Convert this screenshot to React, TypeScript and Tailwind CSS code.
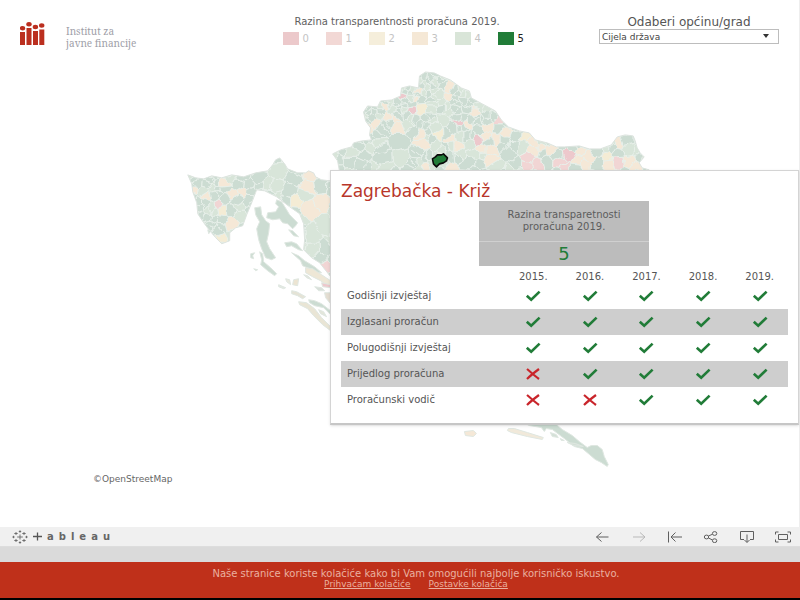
import { useMemo, useState } from "react"

type Point = [number, number]

const legend = [
  { level: 0, swatch: "bg-[#ecc9cb]" },
  { level: 1, swatch: "bg-[#f2d8d5]" },
  { level: 2, swatch: "bg-[#f5eedb]" },
  { level: 3, swatch: "bg-[#f5e8d6]" },
  { level: 4, swatch: "bg-[#d9e5d8]" },
  { level: 5, swatch: "bg-[#217c38]" },
]

const years = ["2015.", "2016.", "2017.", "2018.", "2019."]

const documents = [
  { name: "Godišnji izvještaj", published: [true, true, true, true, true] },
  { name: "Izglasani proračun", published: [true, true, true, true, true] },
  { name: "Polugodišnji izvještaj", published: [true, true, true, true, true] },
  { name: "Prijedlog proračuna", published: [false, true, true, true, true] },
  { name: "Proračunski vodič", published: [false, false, true, true, true] },
]

const LIGHT = "#d8e5d9"
const DARK = "#ccdcd2"
const TAN = "#f5e8d7"
const CREAM = "#f4ecd5"
const PINK = "#f1d5d4"
const ROSE = "#edc8cc"

// [x, y, radius, fill] of the municipalities that stand out from the rest
const spots: [number, number, number, string][] = [
  [279, 169, 9, LIGHT], [296, 179, 9, DARK], [311, 175, 6, TAN], [321, 185, 9, DARK], [308, 187, 6, TAN],
  [305, 195, 6, LIGHT], [290, 192, 6, DARK], [296, 201, 8, CREAM], [309, 208, 10, TAN], [323, 201, 12, TAN],
  [313, 234, 13, LIGHT], [326, 226, 10, LIGHT], [327, 250, 9, DARK], [313, 251, 9, LIGHT],
  [208, 197, 5, TAN], [233, 195, 6, TAN], [243, 191, 6, TAN], [223, 210, 5, CREAM], [230, 225, 7, TAN], [220, 205, 2, PINK],
  [240, 215, 8, LIGHT], [242, 176, 8, DARK], [258, 178, 8, DARK], [222, 240, 4, CREAM],
  [403, 97, 4, ROSE], [412, 110, 4, ROSE], [422, 109, 6, CREAM], [419, 92, 3, TAN], [388, 118, 4, TAN],
  [376, 123, 5, TAN], [400, 126, 4, TAN], [386, 105, 3, TAN], [424, 144, 6, TAN], [400, 141, 14, DARK], [415, 131, 8, DARK],
  [404, 157, 11, LIGHT], [366, 157, 9, DARK], [350, 151, 8, LIGHT], [381, 158, 8, DARK], [350, 164, 8, DARK],
  [440, 134, 6, CREAM], [451, 139, 6, TAN], [457, 146, 4, TAN], [443, 120, 9, LIGHT], [450, 88, 5, TAN],
  [448, 97, 5, TAN], [468, 124, 5, TAN], [460, 123, 2, ROSE], [478, 139, 2, ROSE], [500, 120, 5, PINK],
  [478, 131, 4, DARK], [485, 138, 4, TAN], [472, 142, 4, LIGHT],
  [489, 127, 5, TAN], [506, 132, 5, TAN], [498, 141, 5, TAN], [492, 150, 5, TAN], [483, 150, 5, TAN],
  [500, 128, 4, DARK], [516, 136, 7, DARK], [527, 137, 6, CREAM], [536, 144, 3, TAN], [524, 147, 8, LIGHT], [509, 152, 8, DARK],
  [530, 158, 7, PINK], [527, 167, 6, PINK], [539, 164, 5, PINK], [534, 151, 4, TAN], [552, 151, 5, TAN],
  [547, 162, 7, DARK], [560, 163, 6, PINK], [570, 153, 6, ROSE], [564, 169, 4, PINK], [581, 151, 6, TAN],
  [590, 157, 7, TAN], [579, 159, 5, TAN], [578, 169, 8, DARK], [597, 167, 6, DARK], [620, 143, 4, TAN],
  [628, 140, 5, DARK], [630, 149, 8, LIGHT], [619, 163, 6, PINK], [609, 155, 4, CREAM], [632, 161, 7, TAN],
  [638, 165, 5, TAN], [611, 168, 5, TAN], [426, 167, 6, TAN], [450, 168, 7, TAN], [490, 160, 5, TAN],
  [479, 101, 3, DARK], [432, 164, 6, LIGHT], [469, 163, 8, DARK], [495, 168, 7, LIGHT], [467, 110, 6, DARK],
  [326, 268, 10, PINK],
]

const mainland =
  "M188 175 L196 178 204 179 212 176 222 178 232 175 244 177 256 173 268 171 273 165 276 160 280 158 285 164 288 169 298 173 306 173 309 171 314 173 316 177 322 180 331 181 340 172 338 161 333 154 341 150 352 147 354 143 362 141 372 140 370 135 371 128 366 121 364 112 368 106 378 107 381 101 392 100 401 96 402 88 410 86 419 88 420 76 426 72 435 73 441 76 451 80 462 88 470 91 472 98 483 104 496 111 502 120 509 127 520 131 530 133 536 140 548 143 557 147 565 147 580 146 590 149 601 149 612 145 618 137 626 135 634 136 636 141 638 148 641 153 645 157 640 163 643 168 650 170 650 190 400 300 331 277 320 263 312 258 304 250 305 240 304 224 300 214 290 207 277 197 265 191 257 190 252 203 247 215 243 226 236 228 230 233 230 241 222 244 216 238 210 231 204 223 198 214 197 203 193 192 192 184Z"

const islands: { d: string; fill: string }[] = [
  { d: "M255 208 L261 207 262 215 266 221 270 224 269 233 267 242 270 249 276 258 272 260 266 258 262 249 259 240 257 229 260 222 256 215Z", fill: DARK },
  { d: "M260 252 L263 254 264 262 271 268 277 274 275 276 268 271 261 265 262 260Z", fill: DARK },
  { d: "M251 254 L255 253 253 256 254 259 251 258Z", fill: DARK },
  { d: "M254 269 L258 270 256 271Z", fill: DARK },
  { d: "M277 200 L282 202 287 210 290 215 298 223 296 226 293 229 288 224 283 223 280 219 273 220 267 218 268 213 276 212 279 207 276 204Z", fill: DARK },
  { d: "M289 230 L293 231 299 237 294 236Z", fill: DARK },
  { d: "M285 243 L292 242 297 244 303 251 299 250 292 246 287 247Z", fill: DARK },
  { d: "M292 253 L299 256 305 261 315 267 322 273 318 273 310 269 303 266 301 261Z", fill: DARK },
  { d: "M306 268 L313 269 322 275 331 281 331 288 321 281 313 277 306 273Z", fill: "#eee7d6" },
  { d: "M304 275 L308 276 312 280 307 278Z", fill: "#e2e6df" },
  { d: "M286 279 L290 280 291 285 287 282Z", fill: "#e8e9df" },
  { d: "M294 280 L299 279 298 286 293 285Z", fill: "#ece4d2" },
  { d: "M279 285 L286 288 284 289 279 287Z", fill: "#e3e8e2" },
  { d: "M292 291 L297 292 306 297 303 299 298 296 292 294Z", fill: "#e5e3d6" },
  { d: "M309 300 L315 301 322 304 331 311 331 315 324 308 315 306 310 303Z", fill: DARK },
  { d: "M319 310 L324 312 327 317 321 314Z", fill: "#e3e6da" },
  { d: "M299 302 L307 303 315 309 322 318 331 327 331 331 323 325 314 316 308 309 300 305Z", fill: "#e9e5d5" },
  { d: "M315 287 L322 288 325 291 319 291Z", fill: "#d9e0da" },
  { d: "M322 283 L331 285 331 288 323 287Z", fill: ROSE },
  { d: "M325 293 L331 293 331 304 326 298Z", fill: "#e4ded2" },
  { d: "M208 230 L211 231 209 234Z", fill: DARK },
  { d: "M465 432 L474 431 477 434 474 437 466 436Z", fill: TAN },
  { d: "M509 429 L515 429 528 433 544 438 543 440 528 437 512 433 508 431Z", fill: "#f1e9da" },
  { d: "M518 420 L550 418 556 424 563 430 573 436 580 442 588 448 592 446 598 446 603 450 605 457 609 465 608 467 602 463 596 460 589 454 583 449 575 447 565 439 553 430 547 429 545 432 542 428 530 426Z", fill: DARK },
  { d: "M551 433 L557 435 559 438 553 437Z M561 439 L565 441 562 441Z M568 443 L576 444 584 447 574 446Z", fill: "#d4e0d7" },
]

// Deterministic noise, so the map is drawn the same on every render
const noise = (n: number) => {
  const s = Math.sin(n * 127.1) * 43758.5453
  return s - Math.floor(s)
}

const buildCells = () => {
  const seeds = spots.map(([x, y, , fill]) => ({ x, y, fill }))
  let n = 1
  for (let row = 0; row < 36; row++) {
    for (let col = 0; col < 92; col++) {
      n += 3
      const x = 180 + col * 6 + noise(n) * 6
      const y = 66 + row * 6 + noise(n + 1) * 6
      // The small municipalities lie in the north
      const isDense = x > 360 && x < 475 && y < 135
      if (!isDense && noise(n + 2) > 0.6) continue
      if (spots.some(([sx, sy, r]) => Math.hypot(sx - x, sy - y) < r * 1.1)) continue
      const shade = noise(n + 0.5)
      seeds.push({ x, y, fill: shade > 0.97 ? TAN : shade > 0.6 ? LIGHT : DARK })
    }
  }
  return seeds.map((a, i) => {
    let cell: Point[] = [[a.x - 22, a.y - 22], [a.x + 22, a.y - 22], [a.x + 22, a.y + 22], [a.x - 22, a.y + 22]]
    seeds.forEach((b, j) => {
      if (i === j || Math.abs(a.x - b.x) > 44 || Math.abs(a.y - b.y) > 44) return
      const dx = b.x - a.x
      const dy = b.y - a.y
      const side = ([x, y]: Point) => (x - (a.x + b.x) / 2) * dx + (y - (a.y + b.y) / 2) * dy
      const next: Point[] = []
      cell.forEach((p, k) => {
        const q = cell[(k + 1) % cell.length]
        const sp = side(p)
        const sq = side(q)
        if (sp <= 0) next.push(p)
        if (sp * sq < 0) {
          const t = sp / (sp - sq)
          next.push([p[0] + (q[0] - p[0]) * t, p[1] + (q[1] - p[1]) * t])
        }
      })
      cell = next
    })
    return { fill: a.fill, points: cell.map(([x, y]) => `${x.toFixed(1)},${y.toFixed(1)}`).join(" ") }
  })
}

function CroatiaMap() {
  const cells = useMemo(buildCells, [])

  return (
    <svg viewBox="0 60 800 410" className="block w-full" role="img" aria-label="Hrvatska">
      <clipPath id="mainland">
        <path d={mainland} />
      </clipPath>
      {/* Bends the straight cell edges into natural borders */}
      <filter id="borders" x="0" y="0" width="100%" height="100%" colorInterpolationFilters="sRGB">
        <feTurbulence type="fractalNoise" baseFrequency="0.11" numOctaves="2" seed="4" />
        <feDisplacementMap in="SourceGraphic" scale="7" xChannelSelector="R" yChannelSelector="G" />
      </filter>
      <g clipPath="url(#mainland)">
        <g filter="url(#borders)" stroke="#e8efea" strokeWidth="0.9" strokeLinejoin="round">
          {cells.map((cell, i) => (
            <polygon key={i} points={cell.points} fill={cell.fill} />
          ))}
        </g>
      </g>
      <path d={mainland} fill="none" stroke="#dde4df" strokeWidth="1" strokeLinejoin="round" />
      {islands.map(({ d, fill }) => (
        <path key={d} d={d} fill={fill} stroke="#dfe7e1" strokeWidth="1" strokeLinejoin="round" />
      ))}
      <path
        d="M433 159 L436 157 438 155 442 155 444 154 446 156 448 158 447 161 444 163 440 164 437 167 434 164Z"
        fill="#217c38"
        stroke="#0a0a0a"
        strokeWidth="1.6"
        strokeLinejoin="round"
      />
    </svg>
  )
}

function InstituteLogo() {
  return (
    <svg viewBox="0 0 25 24" width="25" height="24" fill="#bb2f1f" aria-hidden="true">
      <rect x="0" y="10" width="5" height="13" />
      <rect x="6.5" y="6" width="5" height="17" />
      <rect x="13" y="9" width="5" height="14" />
      <rect x="19.3" y="7.5" width="5" height="15.5" />
      <ellipse cx="2.5" cy="6.2" rx="2.7" ry="2.2" />
      <ellipse cx="9" cy="2.3" rx="2.7" ry="2.2" />
      <ellipse cx="15.4" cy="5" rx="2.7" ry="2.2" />
      <ellipse cx="21.7" cy="3.5" rx="2.7" ry="2.2" />
    </svg>
  )
}

function Mark({ ok }: { ok: boolean }) {
  return ok ? (
    <svg viewBox="0 0 16 12" width="16" height="12" className="mx-auto block" fill="none" stroke="#217c38" role="img" aria-label="Da">
      <path d="M1.8 5.8 L6.2 9.8 L14.6 1.6" strokeWidth="2.6" />
    </svg>
  ) : (
    <svg viewBox="0 0 16 12" width="16" height="12" className="mx-auto block" fill="none" stroke="#c9252b" role="img" aria-label="Ne">
      <path d="M2 1 C5 3.5 10 8 14 11 M14 1 C10 4 5.5 7.5 2 11" strokeWidth="2.2" />
    </svg>
  )
}

function TableauMark() {
  return (
    <svg viewBox="0 0 16 14" width="16" height="14" fill="none" stroke="#666" strokeWidth="0.9" aria-hidden="true">
      <path d="M8 4.5V9.5M5.2 7H10.8M4 2V5M2.3 3.5H5.7M12 2V5M10.3 3.5H13.7M4 9V12M2.3 10.5H5.7M12 9V12M10.3 10.5H13.7M8 0.3V2.7M6.8 1.5H9.2M8 11.3V13.7M6.8 12.5H9.2M1.5 5.8V8.2M0.3 7H2.7M14.5 5.8V8.2M13.3 7H15.7" />
    </svg>
  )
}

const toolbar = [
  { label: "Poništi", stroke: "#5f5f5f", d: "M14.5 6H2.5M7.5 1.5L2.5 6L7.5 10.5" },
  { label: "Ponovi", stroke: "#b9b9b9", d: "M3 6H15M10 1.5L15 6L10 10.5" },
  { label: "Vrati", stroke: "#5f5f5f", d: "M2.5 0.5V11.5M16 6H5M9.5 1.5L5 6L9.5 10.5" },
  { label: "Podijeli", stroke: "#5f5f5f", d: "M6.5 5L10.5 3.2M6.5 7L10.5 9M6.7 6a2.2 1.9 0 1 1-4.4 0a2.2 1.9 0 1 1 4.4 0M14.8 2.5a2.2 1.9 0 1 1-4.4 0a2.2 1.9 0 1 1 4.4 0M14.8 9.7a2.2 1.9 0 1 1-4.4 0a2.2 1.9 0 1 1 4.4 0" },
  { label: "Preuzmi", stroke: "#5f5f5f", d: "M6 8.5H2.5V0.5H15.5V8.5H12M9 3.5V11.2M6.5 9L9 11.5L11.5 9" },
  { label: "Cijeli zaslon", stroke: "#5f5f5f", d: "M4.5 3.5H13.5V8.5H4.5ZM1.5 3.5V1H4.5M13.5 1H16.5V3.5M16.5 8.5V11H13.5M4.5 11H1.5V8.5" },
]

function MunicipalityTooltip() {
  return (
    <div className="absolute top-[110px] right-0 w-[469px] border border-[#d4d4d4] border-b-2 border-b-[#c6c6c6] bg-white p-2.5 shadow-sm">
      <h2 className="text-[17px] leading-5 text-[#b8362a]">Zagrebačka - Križ</h2>
      <div className="ml-[138px] w-[170px] bg-[#bcbcbc] text-center">
        <p className="border-b border-[#d0d0d0] px-4 py-2 text-[10px] leading-3 text-[#5d5d5d]">
          Razina transparetnosti
          <br />
          proračuna 2019.
        </p>
        <p className="text-lg leading-6 text-[#217c38]">5</p>
      </div>
      <table className="w-full table-fixed text-[10px] leading-3 text-[#555]">
        <thead>
          <tr className="h-[17px]">
            <td className="w-[164px]" />
            {years.map((year) => (
              <th key={year} scope="col" className="pb-0 align-bottom font-normal">
                {year}
              </th>
            ))}
          </tr>
        </thead>
        <tbody>
          {documents.map((doc) => (
            <tr key={doc.name} className="h-[26px] even:bg-[#cecece]">
              <th scope="row" className="pl-1.5 text-left font-normal">
                {doc.name}
              </th>
              {doc.published.map((ok, i) => (
                <td key={years[i]}>
                  <Mark ok={ok} />
                </td>
              ))}
            </tr>
          ))}
        </tbody>
      </table>
    </div>
  )
}

export default function App() {
  const [town, setTown] = useState("Cijela država")

  return (
    <div className="flex min-h-screen flex-col bg-white font-['DejaVu_Sans',sans-serif]">
      <main className="flex-1 border-r border-[#eee]">
        {/* Header */}
        <header className="grid h-[60px] grid-cols-[1fr_auto_1fr] items-start px-5">
          <div className="flex gap-[21px] pt-[22px]">
            <InstituteLogo />
            <p className="pt-[3px] font-['Noto_Serif','Liberation_Serif',serif] text-[10px] leading-3 text-[#a0a0a8]">
              Institut za
              <br />
              javne financije
            </p>
          </div>

          <div className="pt-4 pl-6">
            <p className="pl-3 text-[10px] leading-3 text-[#606060]">Razina transparentnosti proračuna 2019.</p>
            <ul className="mt-1 flex">
              {legend.map(({ level, swatch }) => (
                <li key={level} className="flex w-[43px] items-center gap-1 text-[10px] leading-3">
                  <span className={`h-[13px] w-4 ${swatch}`} />
                  <span className={level === 5 ? "text-[#222]" : "text-[#c4c4c4]"}>{level}</span>
                </li>
              ))}
            </ul>
          </div>

          <div className="w-[180px] justify-self-end pt-[15px]">
            <label htmlFor="town" className="block text-center text-xs leading-[14px] text-[#555]">
              Odaberi općinu/grad
            </label>
            <div className="relative">
              <select
                id="town"
                value={town}
                onChange={(e) => setTown(e.target.value)}
                className="block h-[15px] w-full appearance-none border border-[#bdbdbd] bg-white pl-0.5 text-[9px] leading-3 text-[#444]"
              >
                <option>Cijela država</option>
                <option>Križ</option>
              </select>
              <svg viewBox="0 0 6 4" width="6" height="4" className="pointer-events-none absolute top-[5px] right-2.5" fill="#333">
                <path d="M0 0H6L3 4Z" />
              </svg>
            </div>
          </div>
        </header>

        {/* Map */}
        <div className="relative">
          <CroatiaMap />
          <MunicipalityTooltip />
          <p className="mt-1 pl-[93px] text-[9px] leading-3 text-[#666]">©OpenStreetMap</p>
        </div>
      </main>

      {/* Tableau toolbar */}
      <div className="flex h-5 items-center justify-between border-b border-[#ddd] bg-[#f0f0f0] pr-2 pl-3">
        <div className="flex items-center gap-[5px]">
          <TableauMark />
          <svg viewBox="0 0 9 9" width="9" height="9" stroke="#555" strokeWidth="1.3" aria-hidden="true">
            <path d="M4.5 0.5V8.5M0 4.5H9" />
          </svg>
          <span className="flex gap-[5px] text-[10px] leading-4 font-bold text-[#666]">
            {"ableau".split("").map((letter, i) => (
              <span key={i}>{letter}</span>
            ))}
          </span>
        </div>
        <div className="flex gap-[18px]">
          {toolbar.map(({ label, stroke, d }) => (
            <button key={label} type="button" aria-label={label}>
              <svg viewBox="0 0 18 12" width="18" height="12" fill="none" stroke={stroke} strokeWidth="1">
                <path d={d} />
              </svg>
            </button>
          ))}
        </div>
      </div>
      <div className="h-[15px] bg-[#dadada]" />

      {/* Cookie notice */}
      <footer className="h-[38px] border-b-2 border-black bg-[#bf301a] pt-1.5 pl-8 text-center leading-[11px] text-[#eab0a0]">
        <p className="text-[10px]">Naše stranice koriste kolačiće kako bi Vam omogućili najbolje korisničko iskustvo.</p>
        <p className="flex justify-center gap-[18px] text-[9px]">
          <a href="#prihvacam" className="underline">Prihvaćam kolačiće</a>
          <a href="#postavke" className="underline">Postavke kolačića</a>
        </p>
      </footer>
    </div>
  )
}
